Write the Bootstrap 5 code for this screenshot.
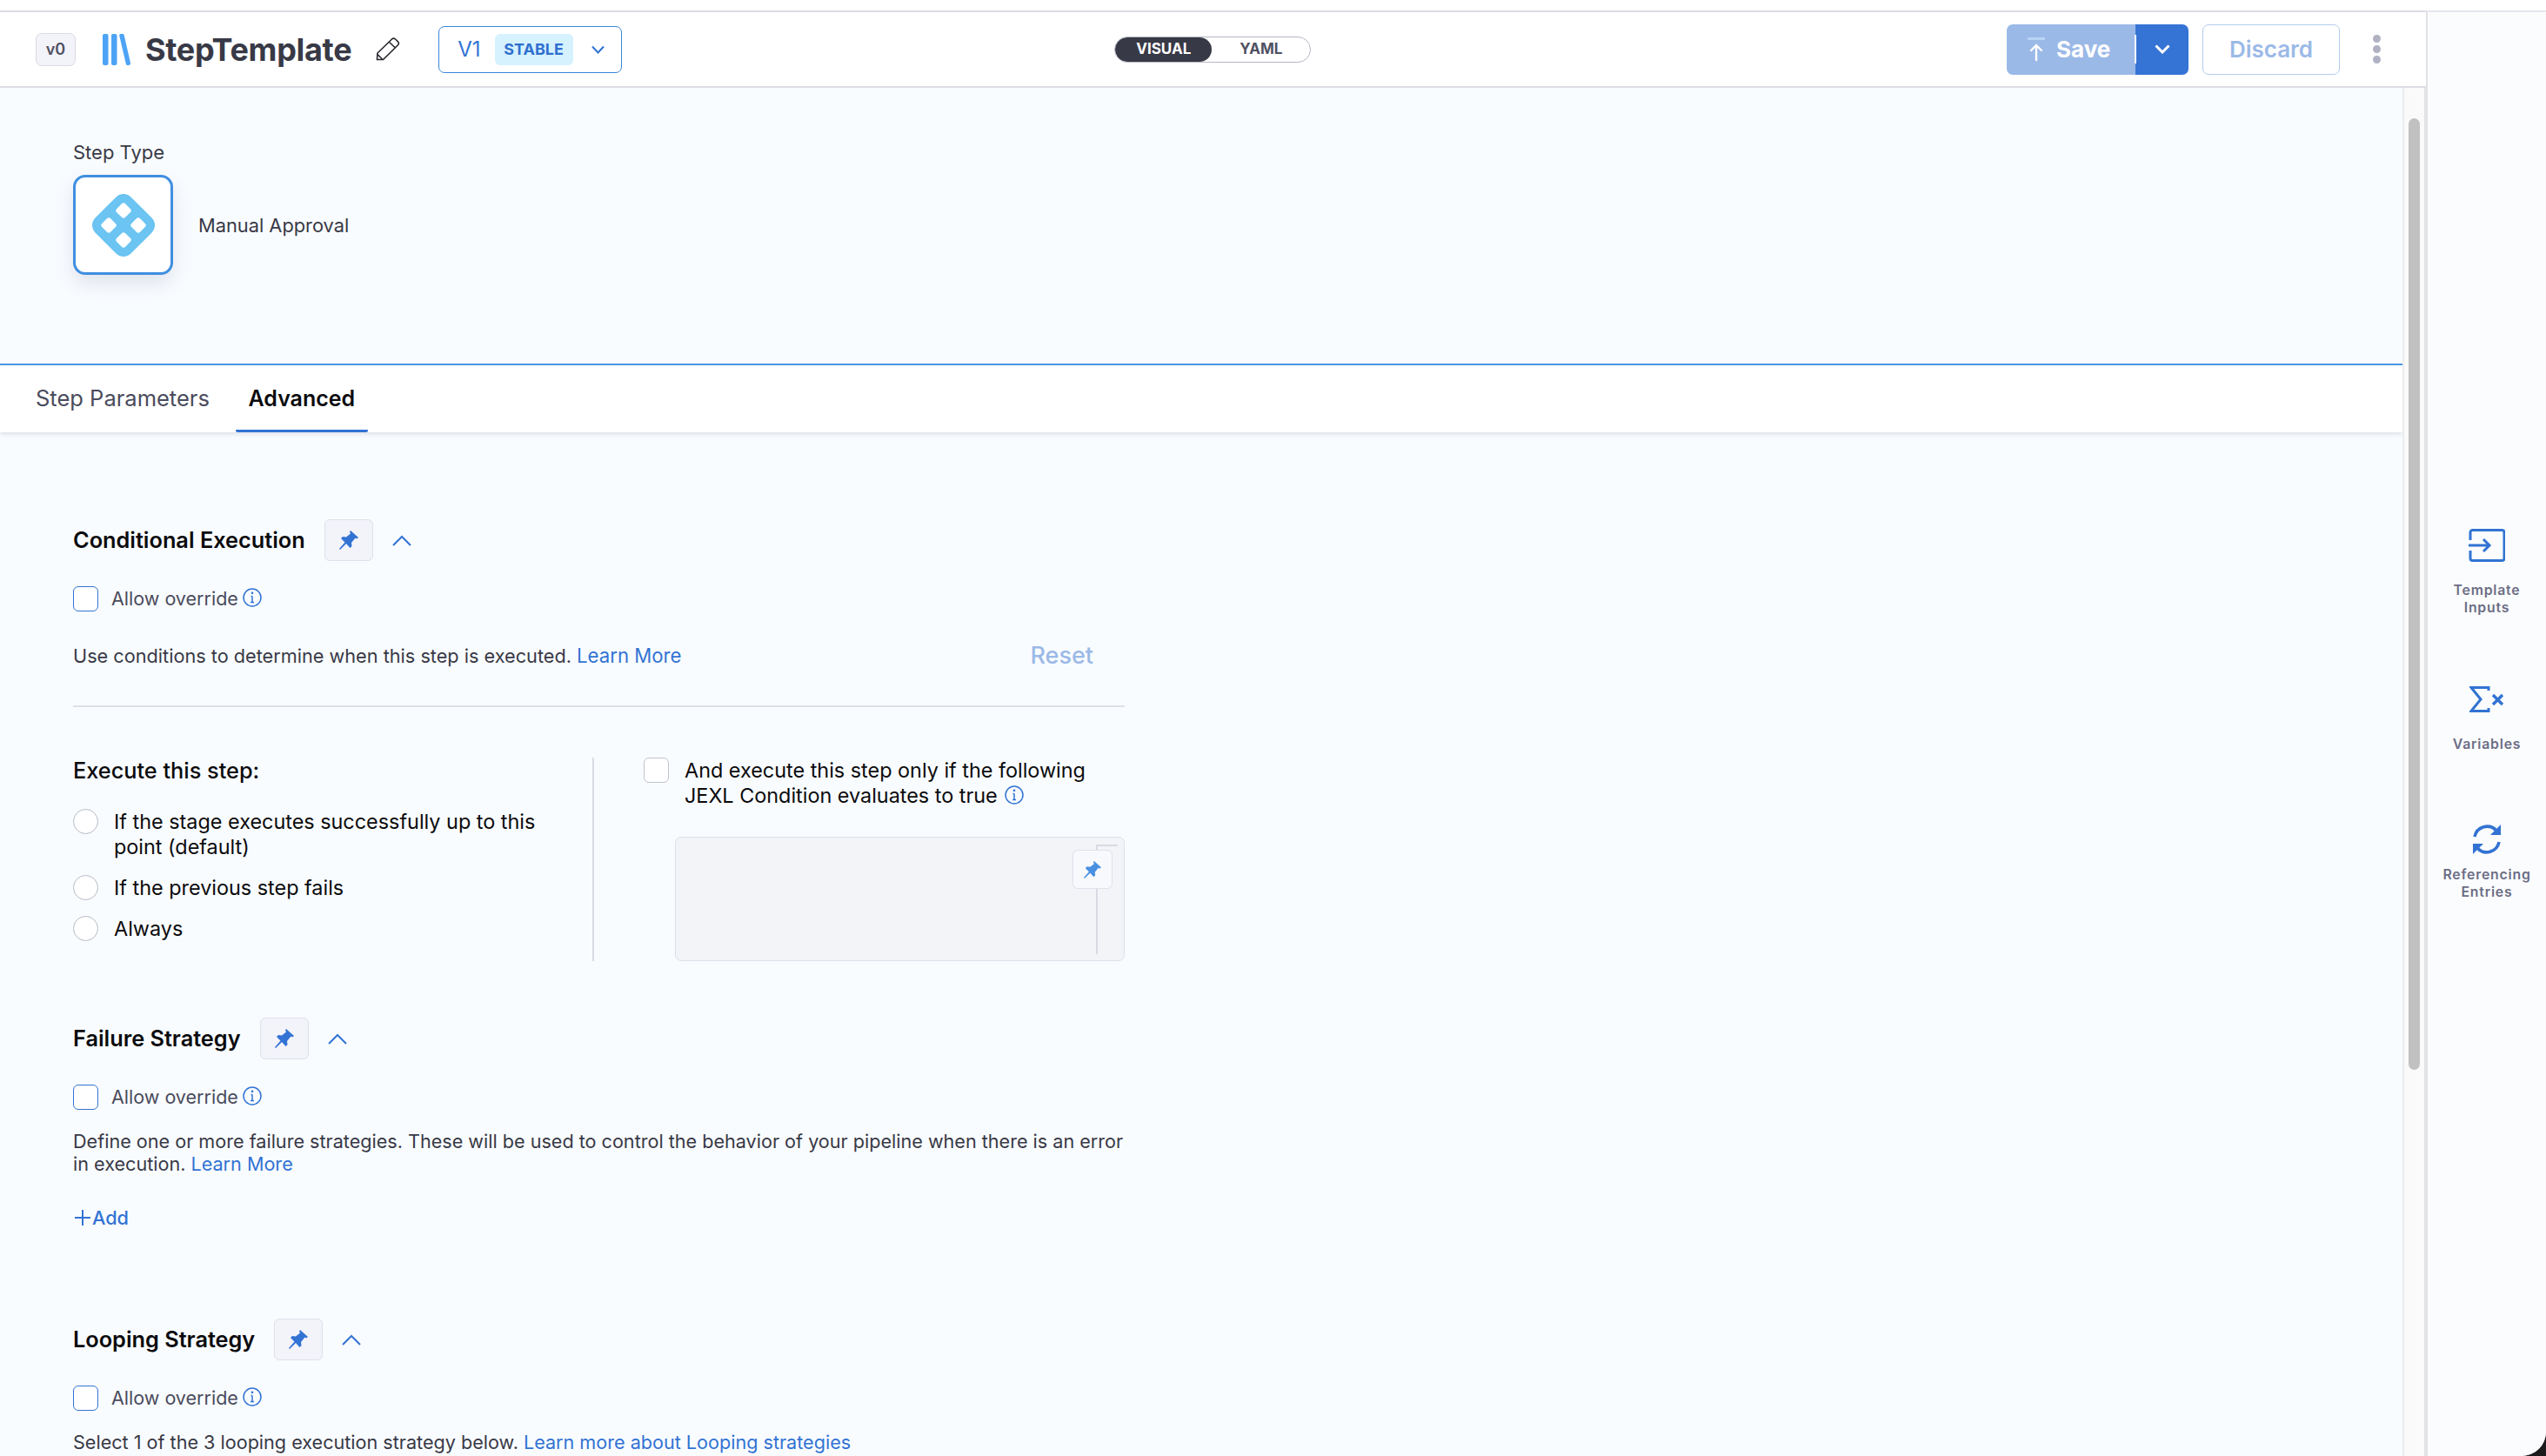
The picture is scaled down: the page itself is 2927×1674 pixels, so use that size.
<!DOCTYPE html>
<html lang="en">
<head>
<meta charset="UTF-8">
<title>StepTemplate</title>
<link href="https://cdn.jsdelivr.net/npm/bootstrap@5.3.3/dist/css/bootstrap.min.css" rel="stylesheet">
<style>
html, body { height: 100%; margin: 0; background: #1c1c1c; overflow: hidden; }
body { font-family: Inter, "Liberation Sans", sans-serif; font-size: 21.7px; color: #383946; }
.app-frame { width: 2927px; height: 1674px; background: #f9fcff; border-bottom-right-radius: 28px; overflow: hidden; }
.top-strip { height: 12px; background: #fff; flex: none; }
.main-col { width: 2789px; flex: none; border-top: 2px solid #dcdce6; min-height: 0; }
.rail-col { flex: 1; background: #fbfcfd; border-top: 2px solid #e6e6ee; border-left: 2px solid #e2e2e2; padding-top: 594px; }
.head-bar { height: 87px; flex: none; background: #fff; border-bottom: 2px solid #dcdce6; padding-left: 41px; padding-right: 51px; }
.ver-chip { width: 46px; height: 38px; background: #f3f3fa; border: 1px solid #d9dae5; border-radius: 7px; font-size: 18px; font-weight: 600; color: #4f5162; }
.tpl-logo { margin-left: 30px; }
.tpl-name { margin-left: 17px; font-size: 36px; font-weight: 700; color: #383946; line-height: 1; letter-spacing: -.3px; }
.tpl-edit { margin-left: 28px; }
.ver-select { margin-left: 44px; width: 211px; height: 54px; border: 1.5px solid #3b86dc; border-radius: 7px; color: #3273d3; font-size: 24px; padding-left: 21px; }
.ver-tag { margin-left: 16px; width: 90px; height: 36px; background: #d5f2fe; border-radius: 6px; font-size: 18px; font-weight: 700; color: #2f6fcf; }
.ver-chev { margin-left: 21px; }
.mode-toggle { margin-left: 566px; width: 226px; height: 30px; border: 1.5px solid #b6b7c4; border-radius: 15px; font-size: 17px; font-weight: 700; color: #4f5162; overflow: hidden; }
.mode-on { width: 111px; height: 100%; background: #383946; color: #fff; border-radius: 15px; }
.mode-off { flex: 1; }
.save-group { height: 58px; }
.save-main, .save-main:disabled { width: 149px; height: 58px; background: #9bb9e7; border: 0; border-radius: 7px 0 0 7px; color: #fff; font-size: 26px; font-weight: 700; opacity: 1; gap: 13px; padding: 0 0 0 24px; }
.save-caret { position: relative; width: 61px; height: 58px; background: #3574d4; border: 0; border-radius: 0 7px 7px 0; padding: 0; }
.caret-sep { position: absolute; left: -1px; top: 12px; width: 2px; height: 33px; background: #fff; }
.discard-btn, .discard-btn:disabled { margin-left: 16px; width: 158px; height: 58px; background: #fff; border: 1.5px solid #b4cbee; border-radius: 7px; color: #9bb9e7; font-size: 26px; font-weight: 600; opacity: 1; padding: 0; }
.more-dots { margin-left: 38px; width: 10px; }
.more-dots i { display: block; width: 9px; height: 9px; border-radius: 50%; background: #b0b1c3; margin: 3px 0; }
.scroll-body { min-height: 0; overflow: hidden; }
.scroll-pane { width: 2762px; flex: none; }
.scroll-track { width: 27px; flex: none; background: #fafafa; border-left: 2px solid #ececec; border-right: 2px solid #e4e4e4; padding: 35px 5px 0; }
.scroll-thumb { height: 1094px; background: #c1c1c1; border-radius: 8px; }
.step-head { height: 317px; padding: 61px 0 0 84px; }
.step-label { font-size: 22px; line-height: 26px; }
.step-pick { margin-top: 13px; }
.step-icon { width: 115px; height: 115px; background: #fff; border: 3px solid #3f8fe0; border-radius: 14px; box-shadow: 0 10px 22px rgba(70,80,120,.14); }
.step-name { margin-left: 29px; font-size: 21.8px; padding-top: 2px; }
.tab-strip { height: 79px; background: #fff; border-top: 2px solid #4a97e4; box-shadow: 0 2px 5px rgba(60,70,100,.16); padding-left: 41px; }
.tab-plain { font-size: 25.5px; line-height: 76px; color: #4a4b5c; font-weight: 400; }
.tab-active { margin-left: 30px; width: 152px; text-align: center; font-size: 25px; line-height: 76px; height: 77px; font-weight: 600; color: #0b0b0d; border-bottom: 3px solid #3273d3; border-radius: 0 0 2px 2px; }
.form-area { padding: 100px 0 0 84px; width: 1293px; }
.sec-head { height: 48px; }
.sec-title { font-size: 25.3px; font-weight: 600; color: #0b0b0d; }
.pin-btn { width: 56px; height: 48px; margin-left: 22px; background: #f3f3fa; border: 1px solid #dfe0ea; border-radius: 6px; }
.sec-chev { margin-left: 22px; }
.override-row { margin-top: 29px; height: 29px; }
.bx-check.form-check-input { width: 29px; height: 29px; margin: 0; float: none; background-color: #fff; border: 1.5px solid #3273d3; border-radius: 6px; flex: none; }
.override-text { margin-left: 15px; color: #4a4b5c; font-size: 21.5px; }
.info-mark { margin-left: 5px; position: relative; top: -2px; flex: none; }
.jexl-info { margin-left: 8px; top: -3px; }
.desc-row { margin-top: 36px; height: 30px; padding-right: 36px; font-size: 21.7px; }
.blue-link { color: #3273d3; text-decoration: none; }
.desc-row .blue-link { font-size: 22.2px; }
.reset-link { color: #9bb9e7; font-size: 27px; font-weight: 500; text-decoration: none; }
.sec-rule { margin: 42px 0 0; border: 0; border-top: 2px solid #dfe1e8; opacity: 1; }
.exec-row { margin-top: 58px; height: 234px; }
.exec-left { width: 597px; flex: none; font-size: 23.4px; color: #0b0b0d; line-height: 29px; }
.exec-title { font-size: 25.3px; font-weight: 500; height: 30px; line-height: 30px; margin-bottom: 29px; }
.exec-opt { margin-bottom: 18px; }
.exec-opt .form-check-input { width: 29px; height: 29px; margin: 0 18px 0 0; float: none; background-color: #fff; border: 1.5px solid #b9bac6; flex: none; }
.exec-right { flex: 1; border-left: 2px solid #d9dae2; padding-left: 57px; font-size: 23.4px; line-height: 29px; color: #0b0b0d; }
.jexl-check.form-check-input { border-color: #c1c2cd; margin-right: 18px; }
.jexl-box { position: relative; margin: 33px 0 0 36px; height: 143px; background: #f3f4f8; border: 1px solid #dfe0e8; border-radius: 7px; }
.jexl-line { position: absolute; left: 483px; top: 58px; height: 76px; border-left: 2px solid #d8d9e2; }
.jexl-tick { position: absolute; left: 483px; top: 8px; width: 25px; height: 8px; border-left: 2px solid #d8d9e2; border-top: 2px solid #d8d9e2; }
.jexl-pin { position: absolute; left: 456px; top: 14px; width: 46px; height: 45px; background: #f8f9fc; border: 1px solid #dfe0ea; border-radius: 6px; }
.fail-head { margin-top: 65px; }
.fail-desc { margin-top: 23px; margin-right: -4px; line-height: 26px; font-size: 21.6px; }
.add-link { margin-top: 34px; height: 30px; color: #3273d3; font-size: 21.7px; font-weight: 500; gap: 2px; padding-left: 2px; }
.loop-head { margin-top: 101px; }
.rail-item { width: 100%; font-size: 15.8px; line-height: 20px; font-weight: 600; letter-spacing: .8px; color: #6b6d85; text-align: center; }
.rail-item svg { display: block; margin-bottom: 23px; }
.rail-item .sum-ico { margin-bottom: 27px; }
.rail-item .sync-ico { margin-bottom: 14px; }
</style>
</head>
<body>
<div class="app-frame d-flex flex-column">
  <div class="top-strip"></div>
  <div class="d-flex flex-grow-1" style="min-height:0">
    <div class="main-col d-flex flex-column">
      <div class="head-bar d-flex align-items-center">
        <div class="ver-chip d-flex align-items-center justify-content-center">v0</div>
        <svg class="tpl-logo" width="33" height="36" viewBox="0 0 33 36"><g fill="#4da3f5"><rect x="1" y="0" width="6.500" height="36" rx="2"/><rect x="11" y="0" width="6.500" height="36" rx="2"/><path d="M20.300 2.200C19.800.6 21 0 22.500 0h1.200c.9 0 1.700.5 2 1.400L32.900 33c.4 1.700-.6 3-2.200 3h-.8c-1 0-1.800-.7-2.100-1.600Z"/></g></svg>
        <div class="tpl-name">StepTemplate</div>
        <svg class="tpl-edit" width="28" height="27" viewBox="0 0 28 27" fill="none" stroke="#26262e" stroke-width="1.600"><path d="M1.500 25.500 2 18 18.500 2a3 3 0 0 1 4 0l3 2.800a3 3 0 0 1 0 4L8.500 25.500Z"/><path d="M15.500 5.500 22.500 12M2 19.500 7.500 25"/></svg>
        <div class="ver-select d-flex align-items-center">
          <span>V1</span>
          <span class="ver-tag d-flex align-items-center justify-content-center">STABLE</span>
          <svg class="ver-chev" width="15" height="10" viewBox="0 0 15 10" fill="none" stroke="#3273d3" stroke-width="2"><path d="M1 1.500 7.500 8.500 14 1.500"/></svg>
        </div>
        <div class="mode-toggle d-flex align-items-center">
          <div class="mode-on d-flex align-items-center justify-content-center">VISUAL</div>
          <div class="mode-off text-center">YAML</div>
        </div>
        <div class="ms-auto d-flex align-items-center">
          <div class="btn-group save-group">
            <button class="btn save-main d-flex align-items-center" disabled>
              <svg width="20" height="28" viewBox="0 0 20 28"><rect x="0" y="0" width="20" height="3" fill="#b9d4f5"/><path d="M10 26V9M4 15l6-6 6 6" fill="none" stroke="#fff" stroke-width="2.400" stroke-linecap="round"/></svg>
              <span>Save</span>
            </button>
            <button class="btn save-caret d-flex align-items-center justify-content-center">
              <span class="caret-sep"></span>
              <svg width="18" height="11" viewBox="0 0 18 11" fill="none" stroke="#fff" stroke-width="3"><path d="M1.500 1.500 9 9 16.500 1.500"/></svg>
            </button>
          </div>
          <button class="btn discard-btn" disabled>Discard</button>
          <div class="more-dots"><i></i><i></i><i></i></div>
        </div>
      </div>
      <div class="scroll-body d-flex flex-grow-1">
        <div class="scroll-pane">
          <div class="step-head">
            <div class="step-label">Step Type</div>
            <div class="step-pick d-flex align-items-center">
              <div class="step-icon d-flex align-items-center justify-content-center">
                <svg width="72" height="72" viewBox="0 0 72 72"><rect x="7" y="7" width="58" height="58" rx="12" transform="rotate(45 36 36)" fill="#6bc4f2"/><g fill="#fff" transform="rotate(45 36 36)"><rect x="17" y="17" width="14" height="14" rx="3"/><rect x="41" y="17" width="14" height="14" rx="3"/><rect x="17" y="41" width="14" height="14" rx="3"/><rect x="41" y="41" width="14" height="14" rx="3"/></g></svg>
              </div>
              <div class="step-name">Manual Approval</div>
            </div>
          </div>
          <div class="tab-strip d-flex">
            <div class="tab-plain">Step Parameters</div>
            <div class="tab-active">Advanced</div>
          </div>
          <div class="form-area">
            <div class="sec-head d-flex align-items-center">
              <div class="sec-title">Conditional Execution</div>
              <div class="pin-btn d-flex align-items-center justify-content-center"><svg width="22" height="22" viewBox="0 0 22 22"><path fill="#3273d3" d="M13 0 22 8 20 9.500 18.500 8.500 14 14 14.500 18 12.500 20 8 15 1 22 0 21 6.500 13.500 2 9 4 7 8 7.500 13 3.500 12 1.500Z"/></svg></div>
              <svg class="sec-chev" width="22" height="13" viewBox="0 0 22 13" fill="none" stroke="#3273d3" stroke-width="2"><path d="M1 12 11 2l10 10"/></svg>
            </div>
            <div class="override-row d-flex align-items-center">
              <input class="form-check-input bx-check" type="checkbox">
              <span class="override-text">Allow override</span>
              <svg class="info-mark" width="22" height="22" viewBox="0 0 22 22" fill="none" stroke="#3273d3" stroke-width="1.500"><circle cx="11" cy="11" r="10"/><path d="M11 9.500v7M9 16.500h4M9.500 9.500H11"/><circle cx="11" cy="5.800" r=".6"/></svg>
            </div>
            <div class="desc-row d-flex align-items-center justify-content-between">
              <div>Use conditions to determine when this step is executed. <a class="blue-link" href="#">Learn More</a></div>
              <a class="reset-link" href="#">Reset</a>
            </div>
            <hr class="sec-rule">
            <div class="exec-row d-flex">
              <div class="exec-left">
                <div class="exec-title">Execute this step:</div>
                <div class="exec-opt d-flex"><input class="form-check-input" type="radio" name="exec"><div>If the stage executes successfully up to this<br>point (default)</div></div>
                <div class="exec-opt d-flex"><input class="form-check-input" type="radio" name="exec"><div>If the previous step fails</div></div>
                <div class="exec-opt d-flex"><input class="form-check-input" type="radio" name="exec"><div>Always</div></div>
              </div>
              <div class="exec-right">
                <div class="d-flex">
                  <input class="form-check-input bx-check jexl-check" type="checkbox">
                  <div>And execute this step only if the following<br>JEXL Condition evaluates to true<svg class="info-mark jexl-info" width="22" height="22" viewBox="0 0 22 22" fill="none" stroke="#3273d3" stroke-width="1.500"><circle cx="11" cy="11" r="10"/><path d="M11 9.500v7M9 16.500h4M9.500 9.500H11"/><circle cx="11" cy="5.800" r=".6"/></svg></div>
                </div>
                <div class="jexl-box">
                  <div class="jexl-tick"></div>
                  <div class="jexl-line"></div>
                  <div class="jexl-pin d-flex align-items-center justify-content-center"><svg width="20" height="20" viewBox="0 0 22 22"><path fill="#4a90e2" d="M13 0 22 8 20 9.500 18.500 8.500 14 14 14.500 18 12.500 20 8 15 1 22 0 21 6.500 13.500 2 9 4 7 8 7.500 13 3.500 12 1.500Z"/></svg></div>
                </div>
              </div>
            </div>
            <div class="sec-head fail-head d-flex align-items-center">
              <div class="sec-title">Failure Strategy</div>
              <div class="pin-btn d-flex align-items-center justify-content-center"><svg width="22" height="22" viewBox="0 0 22 22"><path fill="#3273d3" d="M13 0 22 8 20 9.500 18.500 8.500 14 14 14.500 18 12.500 20 8 15 1 22 0 21 6.500 13.500 2 9 4 7 8 7.500 13 3.500 12 1.500Z"/></svg></div>
              <svg class="sec-chev" width="22" height="13" viewBox="0 0 22 13" fill="none" stroke="#3273d3" stroke-width="2"><path d="M1 12 11 2l10 10"/></svg>
            </div>
            <div class="override-row d-flex align-items-center">
              <input class="form-check-input bx-check" type="checkbox">
              <span class="override-text">Allow override</span>
              <svg class="info-mark" width="22" height="22" viewBox="0 0 22 22" fill="none" stroke="#3273d3" stroke-width="1.500"><circle cx="11" cy="11" r="10"/><path d="M11 9.500v7M9 16.500h4M9.500 9.500H11"/><circle cx="11" cy="5.800" r=".6"/></svg>
            </div>
            <div class="fail-desc">Define one or more failure strategies. These will be used to control the behavior of your pipeline when there is an error in execution. <a class="blue-link" href="#">Learn More</a></div>
            <div class="add-link d-flex align-items-center">
              <svg width="18" height="18" viewBox="0 0 18 18" stroke="#3273d3" stroke-width="2"><path d="M9 0v18M0 9h18"/></svg><span>Add</span>
            </div>
            <div class="sec-head loop-head d-flex align-items-center">
              <div class="sec-title">Looping Strategy</div>
              <div class="pin-btn d-flex align-items-center justify-content-center"><svg width="22" height="22" viewBox="0 0 22 22"><path fill="#3273d3" d="M13 0 22 8 20 9.500 18.500 8.500 14 14 14.500 18 12.500 20 8 15 1 22 0 21 6.500 13.500 2 9 4 7 8 7.500 13 3.500 12 1.500Z"/></svg></div>
              <svg class="sec-chev" width="22" height="13" viewBox="0 0 22 13" fill="none" stroke="#3273d3" stroke-width="2"><path d="M1 12 11 2l10 10"/></svg>
            </div>
            <div class="override-row d-flex align-items-center">
              <input class="form-check-input bx-check" type="checkbox">
              <span class="override-text">Allow override</span>
              <svg class="info-mark" width="22" height="22" viewBox="0 0 22 22" fill="none" stroke="#3273d3" stroke-width="1.500"><circle cx="11" cy="11" r="10"/><path d="M11 9.500v7M9 16.500h4M9.500 9.500H11"/><circle cx="11" cy="5.800" r=".6"/></svg>
            </div>
            <div class="fail-desc">Select 1 of the 3 looping execution strategy below. <a class="blue-link" href="#">Learn more about Looping strategies</a></div>
          </div>
        </div>
        <div class="scroll-track"><div class="scroll-thumb"></div></div>
      </div>
    </div>
    <div class="rail-col d-flex flex-column align-items-center">
      <div class="rail-item d-flex flex-column align-items-center">
        <svg width="42" height="38" viewBox="0 0 42 38" fill="none" stroke="#3273d3" stroke-width="3"><path d="M2 13V4a2.500 2.500 0 0 1 2.500-2.500h34A2.500 2.500 0 0 1 41 4v30a2.500 2.500 0 0 1-2.500 2.500h-34A2.500 2.500 0 0 1 2 34v-9"/><path d="M0 19h23M17 12l7 7-7 7"/></svg>
        <div>Template<br>Inputs</div>
      </div>
      <div class="rail-item d-flex flex-column align-items-center" style="margin-top:80px">
        <svg class="sum-ico" width="40" height="30" viewBox="0 0 40 30" fill="none" stroke="#3273d3" stroke-width="3"><path d="M22 5V1.500H2L13 15 2 28.500h20V25"/><path d="M27 10 38 21M38 10 27 21" stroke-width="3.400"/></svg>
        <div>Variables</div>
      </div>
      <div class="rail-item d-flex flex-column align-items-center" style="margin-top:82px">
        <svg class="sync-ico" width="34" height="34" viewBox="0 0 34 34" fill="none" stroke="#3273d3" stroke-width="3.600"><path d="M3 14A14.500 14.500 0 0 1 28 7M31 20A14.500 14.500 0 0 1 6 27"/><path d="M33 0v12H21Z" fill="#3273d3" stroke="none"/><path d="M1 34V22h12Z" fill="#3273d3" stroke="none"/></svg>
        <div>Referencing<br>Entries</div>
      </div>
    </div>
  </div>
</div>
<script src="https://cdn.jsdelivr.net/npm/bootstrap@5.3.3/dist/js/bootstrap.bundle.min.js"></script>
</body>
</html>
